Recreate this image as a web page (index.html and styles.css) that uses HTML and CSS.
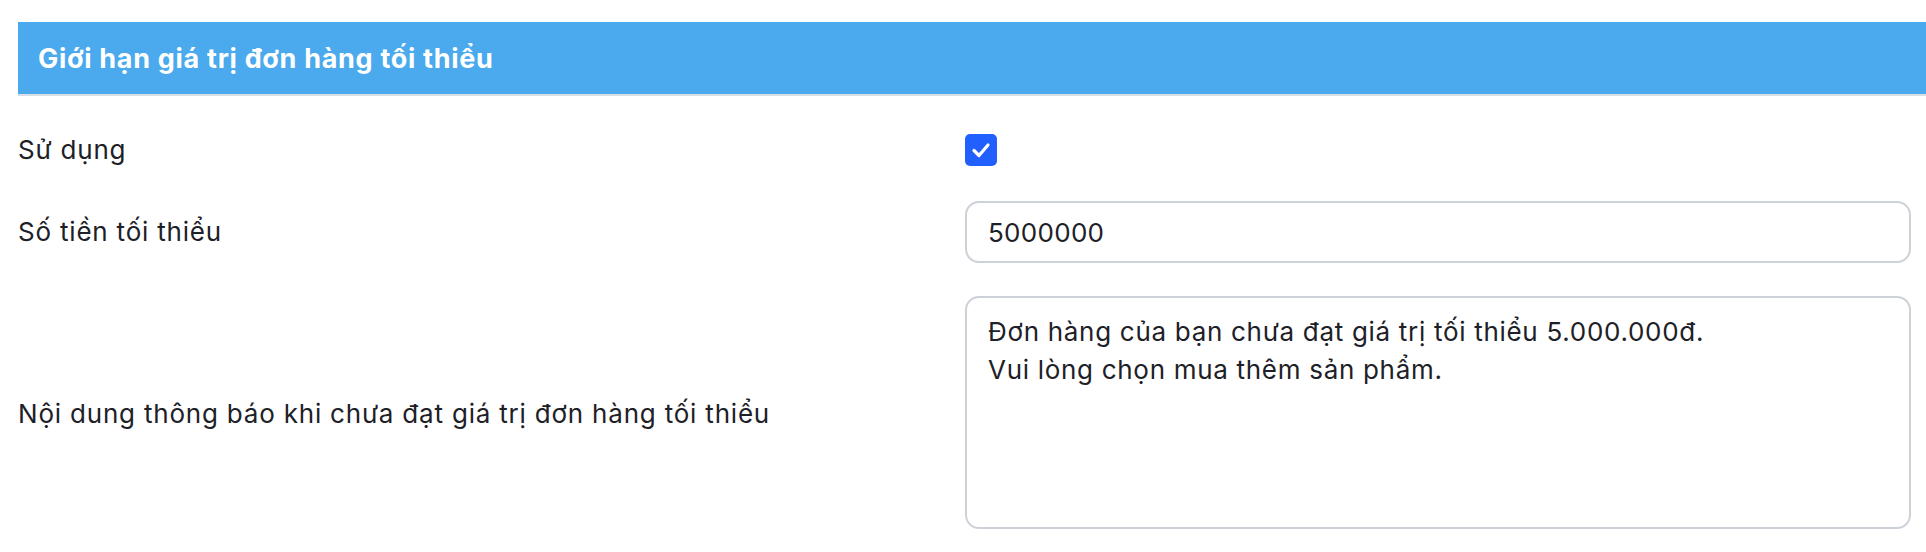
FILE: index.html
```html
<!DOCTYPE html>
<html lang="vi">
<head>
<meta charset="utf-8">
<link rel="stylesheet" href="styles.css">
</head>
<body>
<section class="panel">
  <div class="panel-head">Giới hạn giá trị đơn hàng tối thiểu</div>
  <div class="form">
    <div class="label">Sử dụng</div>
    <div class="control">
      <span class="checkbox"><svg viewBox="0 0 32 32" width="32" height="32"><path d="M9 16.5 L14 21.5 L23 11" fill="none" stroke="#fff" stroke-width="3.2" stroke-linecap="round" stroke-linejoin="round"/></svg></span>
    </div>
    <div class="label">Số tiền tối thiểu</div>
    <div class="control">
      <div class="input">5000000</div>
    </div>
    <div class="label">Nội dung thông báo khi chưa đạt giá trị đơn hàng tối thiểu</div>
    <div class="control">
      <div class="textarea">Đơn hàng của bạn chưa đạt giá trị tối thiểu 5.000.000đ.<br>Vui lòng chọn mua thêm sản phẩm.</div>
    </div>
  </div>
</section>
</body>
</html>
```
FILE: styles.css
```css
html, body {
  margin: 0;
  padding: 0;
  background: #ffffff;
}
body {
  font-family: Inter, "Noto Sans", sans-serif;
  color: #1d2127;
}
.panel {
  padding: 22px 0 0 18px;
}
.panel-head {
  height: 72px;
  background: #4aaaed;
  border-bottom: 2px solid #d6dee6;
  color: #ffffff;
  font-weight: 700;
  font-size: 27px;
  letter-spacing: 0.7px;
  display: flex;
  align-items: center;
  padding-left: 20px;
}
.form {
  display: grid;
  grid-template-columns: 947px 946px;
  row-gap: 35px;
  padding-top: 38px;
  align-items: center;
}
.form .control:nth-child(6) {
  margin-top: -2px;
}
.label {
  font-size: 26px;
  line-height: 32px;
  letter-spacing: 0.8px;
}
.control {
  display: flex;
  align-items: center;
}
.checkbox {
  width: 32px;
  height: 32px;
  border-radius: 5px;
  background: #2160ff;
  display: block;
}
.checkbox svg {
  display: block;
}
.input {
  box-sizing: border-box;
  width: 946px;
  height: 62px;
  border: 2px solid #cdd2d9;
  border-radius: 14px;
  padding: 0 21px;
  font-size: 26px;
  letter-spacing: 0.3px;
  display: flex;
  align-items: center;
}
.textarea {
  box-sizing: border-box;
  width: 946px;
  height: 233px;
  border: 2px solid #cdd2d9;
  border-radius: 14px;
  padding: 15px 21px;
  font-size: 26px;
  line-height: 38px;
  letter-spacing: 0.7px;
}
```
